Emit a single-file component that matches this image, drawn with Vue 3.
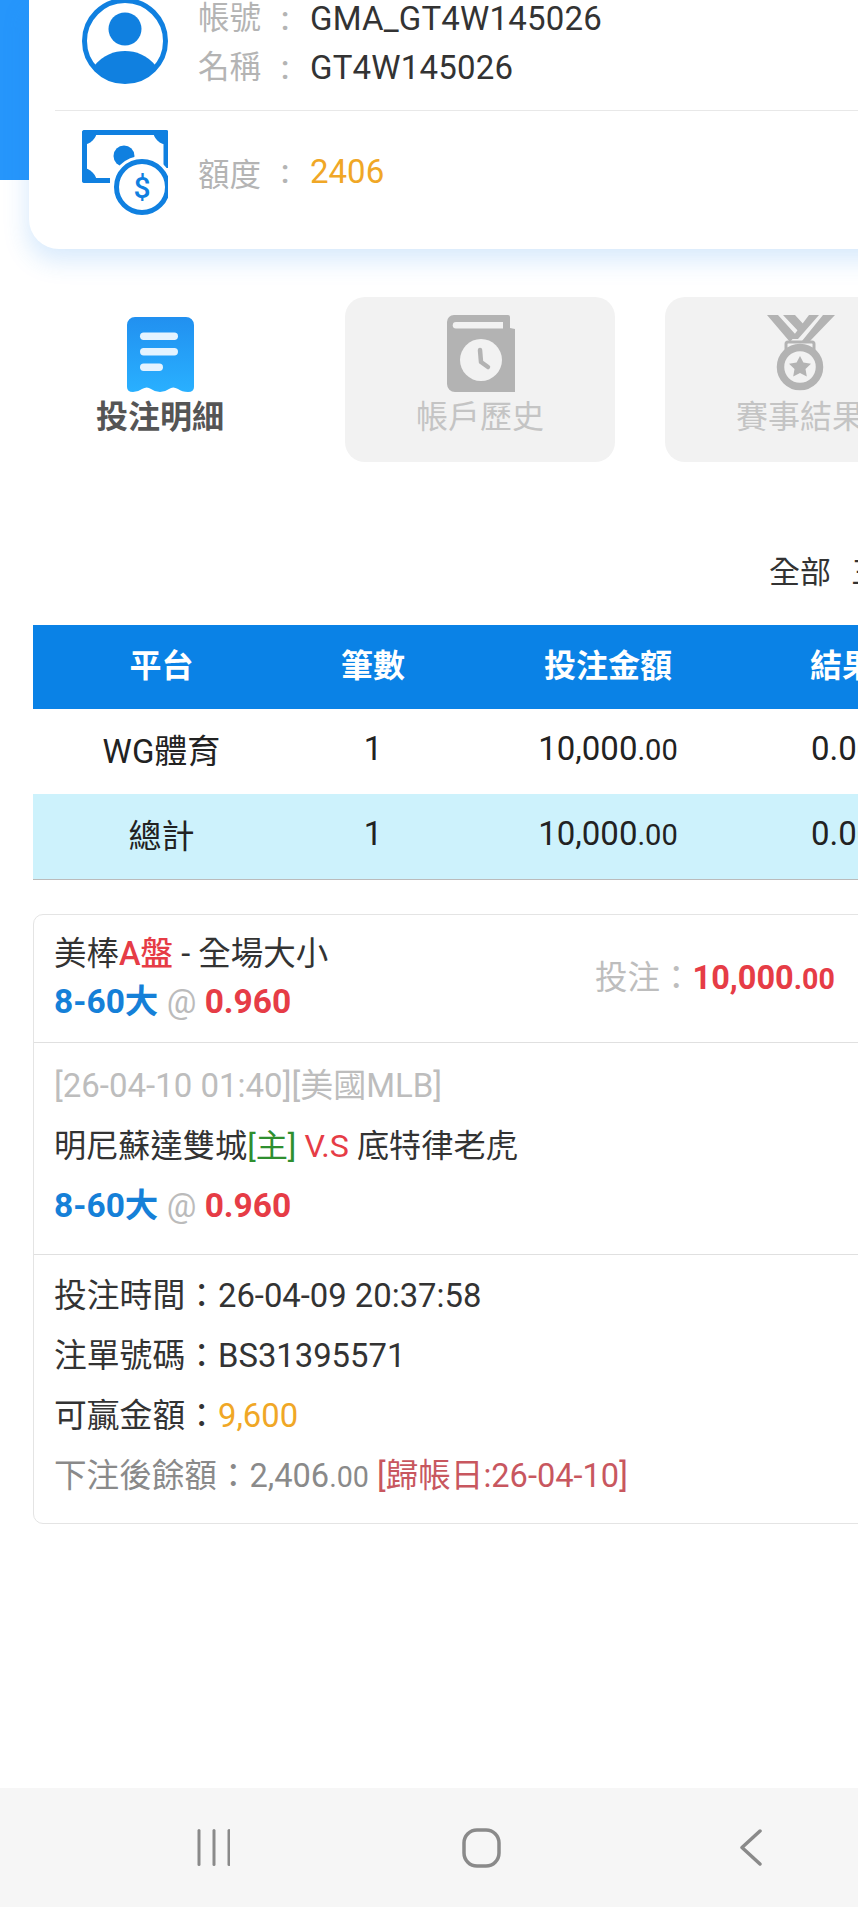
<script setup>
const tableRows = [
  { name: 'WG體育', count: '1', amount: '10,000', result: '0.0', cls: '' },
  { name: '總計', count: '1', amount: '10,000', result: '0.0', cls: 'total' },
]
const navLines = [0, 1, 2]
</script>

<template>
  <div class="screen">
    <div class="page">
      <section class="account-wrap">
        <div class="account-card">
          <div class="info-row top">
            <svg class="big-icon" viewBox="0 0 86 86">
              <circle cx="43" cy="43" r="40.5" fill="#fff" stroke="#1080e0" stroke-width="5" />
              <circle cx="43" cy="31" r="16.5" fill="#1080e0" />
              <path d="M12 68 C21 57 32 53 43 53 C54 53 65 57 74 68 C67 79 55 84 43 84 C31 84 19 79 12 68 Z" fill="#1080e0" />
            </svg>
            <div class="lines">
              <div class="line"><span class="label">帳號</span><span class="colon">:</span><span class="val">GMA_GT4W145026</span></div>
              <div class="line"><span class="label">名稱</span><span class="colon">:</span><span class="val">GT4W145026</span></div>
            </div>
          </div>
          <div class="info-row bottom">
            <svg class="big-icon" viewBox="0 0 86 86">
              <path d="M28 50.5 H2.5 V2.5 H84 V38" fill="none" stroke="#1080e0" stroke-width="5" stroke-linejoin="round" />
              <path d="M0 3 a3 3 0 0 1 3 -3 H15 A15 15 0 0 1 0 15 Z" fill="#1080e0" />
              <path d="M86 3 a3 3 0 0 0 -3 -3 H71 A15 15 0 0 0 86 15 Z" fill="#1080e0" />
              <path d="M0 50 a3 3 0 0 0 3 3 H15 A15 15 0 0 0 0 38 Z" fill="#1080e0" />
              <circle cx="42" cy="26" r="10.5" fill="#1080e0" />
              <circle cx="60" cy="57" r="31" fill="#fff" />
              <circle cx="60" cy="57" r="25.5" fill="#fff" stroke="#1080e0" stroke-width="5" />
              <text x="60" y="67.5" text-anchor="middle" class="dollar">$</text>
            </svg>
            <div class="line quota"><span class="label">額度</span><span class="colon">:</span><span class="gold">2406</span></div>
          </div>
        </div>
      </section>

      <nav class="tabs">
        <div class="tab active">
          <svg class="tab-icon" viewBox="0 0 70 76">
            <defs>
              <linearGradient id="rcpt" x1="0" y1="0" x2="0" y2="1">
                <stop offset="0" stop-color="#2190f0" />
                <stop offset="1" stop-color="#29b0ff" />
              </linearGradient>
            </defs>
            <path d="M9 0 H61 a8 8 0 0 1 8 8 V70 q0 5 -6 5 q-6 0 -10 -3 q-5 -3 -9 0 q-4 3 -9 3 q-5 0 -9 -3 q-4 -3 -9 0 q-4 3 -9 3 q-6 0 -6 -5 V8 a8 8 0 0 1 8 -8 Z" fill="url(#rcpt)" />
            <rect x="15" y="15.5" width="38" height="7.5" rx="3.7" fill="#e4f3ff" />
            <rect x="15" y="31" width="38" height="7.5" rx="3.7" fill="#e4f3ff" />
            <rect x="15" y="46.5" width="23" height="7.5" rx="3.7" fill="#e4f3ff" />
          </svg>
          <span class="tab-text">投注明細</span>
        </div>
        <div class="tab">
          <svg class="tab-icon" viewBox="0 0 70 76">
            <path d="M9 -2 H63 a2 2 0 0 1 2 2 V11 L70 12 V75 H10 a8 8 0 0 1 -8 -8 V5 a7 7 0 0 1 7 -7 Z" fill="#b3b3b3" />
            <path d="M11 5 H58 V11.5 H11 a3.2 3.2 0 0 1 0 -6.5 Z" fill="#f2f2f2" />
            <circle cx="36" cy="43" r="21" fill="#f2f2f2" />
            <path d="M35 33 L36 45 L43 50" fill="none" stroke="#b3b3b3" stroke-width="4.5" stroke-linecap="round" stroke-linejoin="round" />
          </svg>
          <span class="tab-text">帳戶歷史</span>
        </div>
        <div class="tab">
          <svg class="tab-icon" viewBox="0 0 70 76">
            <path d="M2 -2 H13 L31 18 L25 25 Z M18 -2 H30 L41 10 L35 16 Z" fill="#b3b3b3" />
            <path d="M44 -2 H54 L33 22 H26 Z M58 -2 H70 L45 24 H37 Z" fill="#b3b3b3" />
            <path d="M23 25 H47 a2 2 0 0 1 2 2 V36 H21 V27 a2 2 0 0 1 2 -2 Z" fill="#f2f2f2" stroke="#b3b3b3" stroke-width="3" />
            <circle cx="35" cy="50" r="19.5" fill="#f2f2f2" stroke="#b3b3b3" stroke-width="7.5" />
            <path d="M35 39 L38.4 45.6 L46 46.8 L40.5 52 L41.8 59.4 L35 56 L28.2 59.4 L29.5 52 L24 46.8 L31.6 45.6 Z" fill="#b3b3b3" />
          </svg>
          <span class="tab-text">賽事結果</span>
        </div>
      </nav>

      <div class="filter"><span>全部</span><span>三</span></div>

      <div class="table">
        <div class="t-row head">
          <span class="c1">平台</span><span class="c2">筆數</span><span class="c3">投注金額</span><span class="c4">結果</span>
        </div>
        <div v-for="r in tableRows" :key="r.name" class="t-row" :class="r.cls">
          <span class="c1">{{ r.name }}</span>
          <span class="c2">{{ r.count }}</span>
          <span class="c3">{{ r.amount }}<small>.00</small></span>
          <span class="c4">{{ r.result }}<small>0</small></span>
        </div>
      </div>

      <div class="bet-card">
        <div class="bet-sec sec1">
          <div class="sec1-left">
            <div class="b-line">美棒<span class="red strong">A盤</span> - 全場大小</div>
            <div class="b-line odds"><b class="blue">8-60大</b> <span class="at">@</span> <b class="red">0.960</b></div>
          </div>
          <div class="stake"><span class="stake-label">投注：</span><b class="red">10,000<small>.00</small></b></div>
        </div>
        <div class="bet-sec sec2">
          <div class="b-line muted">[26-04-10 01:40][美國MLB]</div>
          <div class="b-line teams">明尼蘇達雙城<span class="green">[主]</span> <span class="red">V.S</span> 底特律老虎</div>
          <div class="b-line odds"><b class="blue">8-60大</b> <span class="at">@</span> <b class="red">0.960</b></div>
        </div>
        <div class="bet-sec sec3">
          <div class="b-line">投注時間：26-04-09 20:37:58</div>
          <div class="b-line">注單號碼：BS31395571</div>
          <div class="b-line">可贏金額：<span class="gold">9,600</span></div>
          <div class="b-line gray">下注後餘額：2,406<small>.00</small> <span class="dim-red">[歸帳日:26-04-10]</span></div>
        </div>
      </div>
    </div>

    <footer class="navbar">
      <svg class="nav-recent" viewBox="0 0 33 37">
        <rect v-for="n in navLines" :key="n" :x="n * 15 + 0.5" y="0" width="3" height="37" rx="1.5" fill="#8a8a8a" />
      </svg>
      <svg class="nav-home" viewBox="0 0 39 40">
        <rect x="2" y="2" width="35" height="36" rx="13" fill="none" stroke="#8a8a8a" stroke-width="3.5" />
      </svg>
      <svg class="nav-back" viewBox="0 0 22 37">
        <path d="M20 2 L2 18.5 L20 35" fill="none" stroke="#8a8a8a" stroke-width="3.5" stroke-linecap="round" stroke-linejoin="round" />
      </svg>
    </footer>
  </div>
</template>

<style>
html, body { margin: 0; padding: 0; background: #fff; overflow: hidden; }
</style>

<style scoped>
.screen {
  width: 858px;
  height: 1907px;
  overflow: hidden;
  display: flex;
  flex-direction: column;
  background: #fff;
  font-family: Roboto, "Noto Sans CJK TC", sans-serif;
  color: #333;
}
.page { flex: 1; width: 1140px; min-height: 0; }

.account-wrap {
  height: 249px;
  padding-left: 29px;
  background: linear-gradient(#2696fb, #2696fb) 0 0 / 29px 180px no-repeat;
}
.account-card {
  height: 249px;
  box-sizing: border-box;
  background: #fff;
  border-radius: 0 0 0 30px;
  padding-left: 26px;
  box-shadow: -2px 12px 24px rgba(40, 140, 240, 0.18);
  overflow: hidden;
}
.info-row { display: flex; gap: 30px; padding-left: 27px; align-items: flex-start; }
.info-row.top { height: 110px; border-bottom: 1px solid #e8e8e8; }
.info-row.top .big-icon { margin-top: -2px; }
.info-row.bottom { padding-top: 19px; }
.big-icon { width: 86px; height: 86px; flex: none; }
.lines { display: flex; flex-direction: column; margin-top: -6px; }
.line { display: flex; align-items: center; height: 49px; font-size: 33px; }
.lines .line { line-height: 49px; }
.quota { margin-top: 17px; }
.label { color: #b4b4b4; width: 62px; white-space: nowrap; font-size: 31.5px; }
.colon { color: #b4b4b4; width: 50px; text-align: center; font-weight: 500; }
.val { color: #333; letter-spacing: 0.2px; }
.gold { color: #f0a726; }
.dollar { font: 500 30px Roboto, sans-serif; fill: #1080e0; }

.tabs { display: flex; gap: 50px; padding: 48px 0 0 25px; }
.tab {
  width: 270px;
  height: 165px;
  border-radius: 20px;
  background: #f2f2f2;
  display: flex;
  flex-direction: column;
  align-items: center;
  padding-top: 20px;
  box-sizing: border-box;
}
.tab.active { background: #fff; }
.tab-icon { width: 70px; height: 76px; flex: none; overflow: visible; }
.tab-text { font-size: 32px; line-height: 48px; color: #c4c4c4; white-space: nowrap; }
.active .tab-text { color: #555; font-weight: 700; }

.filter { display: flex; gap: 20px; padding: 89px 0 0 769px; height: 163px; box-sizing: border-box; font-size: 31px; line-height: 44px; color: #333; }

.table { margin-left: 33px; width: 1000px; }
.t-row { display: flex; align-items: center; height: 85px; box-sizing: border-box; padding-bottom: 6px; font-size: 33px; color: #222; text-align: center; }
.t-row span { display: block; }
.c1 { width: 257px; }
.c2 { width: 166px; }
.c3 { width: 304px; }
.c4 { width: 164px; }
.head { height: 84px; padding-bottom: 9px; background: #0a82e6; color: #fff; font-weight: 700; font-size: 32px; }
.total { background: #cdf2fc; border-bottom: 1px solid #bbb; height: 86px; }
small { font-size: 0.88em; }

.bet-card {
  margin: 34px 0 0 33px;
  width: 1040px;
  border: 1px solid #e4e4e4;
  border-radius: 10px;
  box-sizing: border-box;
  font-size: 32.8px;
}
.bet-sec { padding: 0 20px; border-bottom: 1px solid #e0e0e0; }
.bet-sec:last-child { border-bottom: 0; }
.sec1 { height: 127px; display: flex; align-items: center; }
.sec1-left { width: 541px; margin-top: -2px; font-size: 32.5px; }
.sec2 { height: 212px; padding-top: 13px; box-sizing: border-box; }
.sec3 { height: 268px; padding-top: 11px; box-sizing: border-box; }
.b-line { line-height: 48px; white-space: nowrap; color: #333; }
.sec2 .b-line, .sec3 .b-line { line-height: 60px; height: 60px; }
.teams { font-size: 32.2px; }
.odds { font-size: 33.5px; }
.red { color: #e63c46; }
.strong { font-weight: 500; }
.blue { color: #1580d8; }
.green { color: #2f8f2f; }
.at { color: #bbb; font-size: 33px; }
.b-line.muted { color: #bdbdbd; font-size: 33px; }
.b-line.gray { color: #8a8a8a; font-size: 32.6px; }
.dim-red { color: #c8575f; }
.stake { font-size: 32.5px; margin-top: -8px; }
.stake-label { color: #bdbdbd; }

.navbar {
  height: 119px;
  flex: none;
  background: #f6f6f6;
  display: flex;
  align-items: center;
  padding-left: 197px;
  box-sizing: border-box;
}
.nav-recent { width: 33px; height: 37px; flex: none; }
.nav-home { width: 39px; height: 40px; flex: none; margin-left: 232px; }
.nav-back { width: 22px; height: 37px; flex: none; margin-left: 239px; }
</style>
